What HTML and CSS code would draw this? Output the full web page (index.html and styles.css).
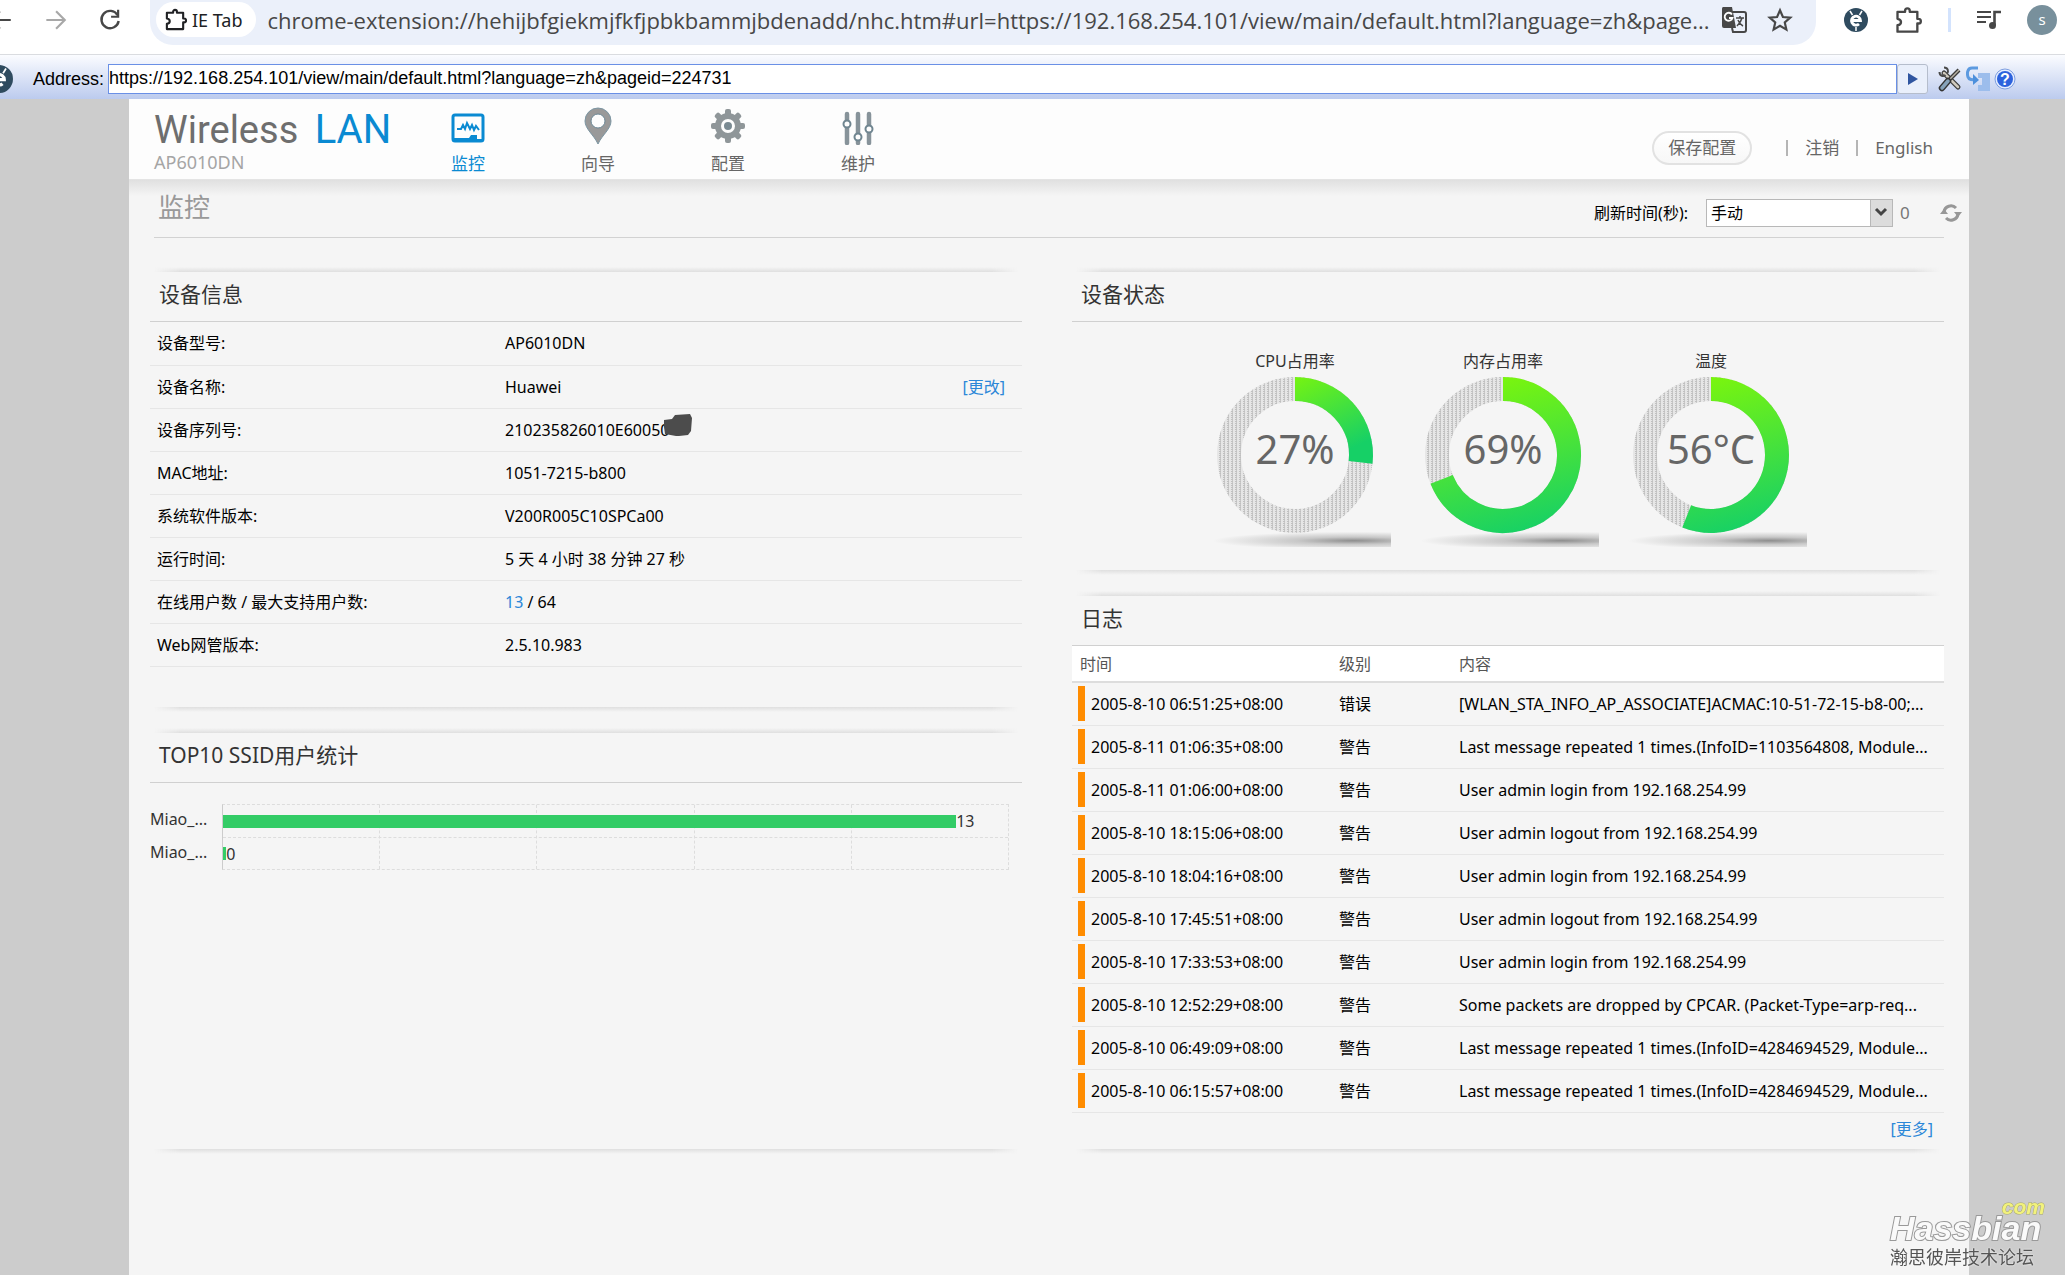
FILE: index.html
```html
<!DOCTYPE html>
<html lang="zh">
<head>
    <meta charset="UTF-8">
    <meta name="viewport" content="width=device-width, initial-scale=1.0">
    <title>Wireless LAN AP6010DN</title>
    <link rel="stylesheet" href="styles.css">
</head>
<body>

    <div class="browser-bar">
        <button class="icon-btn back" aria-label="Back">
            <svg width="26" height="26" viewBox="0 0 24 24"><path d="M21 12H4M11 4l-8 8 8 8" fill="none" stroke="#474747" stroke-width="2"/></svg>
        </button>
        <button class="icon-btn forward" aria-label="Forward">
            <svg width="26" height="26" viewBox="0 0 24 24"><path d="M4 12h17M13 4l8 8-8 8" fill="none" stroke="#a8a8a8" stroke-width="2"/></svg>
        </button>
        <button class="icon-btn reload" aria-label="Reload">
            <svg width="26" height="26" viewBox="0 0 24 24"><path d="M19 7.500A8 8 0 1 0 20 13" fill="none" stroke="#474747" stroke-width="2.200"/><path d="M20.500 2.500v7.500h-7.500v-2h5.500v-5.500z" fill="#474747"/></svg>
        </button>
        <div class="omnibox">
            <span class="chip">
                <svg width="23" height="23" viewBox="0 0 24 24"><path d="M3 5h6.500V4a2 2 0 0 1 4 0v1H20v6h1a2 2 0 0 1 0 4h-1v7H3v-5.500c4-.5 4-5 0-5.500z" fill="none" stroke="#202124" stroke-width="2.200" stroke-linejoin="round"/></svg>
                IE Tab
            </span>
            <span class="url">chrome-extension://hehijbfgiekmjfkfjpbkbammjbdenadd/nhc.htm#url=https://192.168.254.101/view/main/default.html?language=zh&amp;page...</span>
            <button class="icon-btn" aria-label="Translate">
                <svg width="26" height="28" viewBox="0 0 26 28"><path d="M11 6h12a2 2 0 0 1 2 2v16a2 2 0 0 1-2 2H12l-1-4" fill="none" stroke="#474747" stroke-width="2"/><path d="M2 1h9l4 21H3a2 2 0 0 1-2-2V3a2 2 0 0 1 1-2z" fill="#474747"/><path d="M11 8.500A4 4 0 1 0 11.500 12H8" fill="none" stroke="#fff" stroke-width="1.800"/><path d="M15 12h8M19 10v2M21 12c-1 4-3 6-5 8M17 14c1 3 3 5 5 6" fill="none" stroke="#474747" stroke-width="1.500"/></svg>
            </button>
            <button class="icon-btn" aria-label="Bookmark">
                <svg width="26" height="26" viewBox="0 0 24 24"><path d="M12 3l2.700 6.200 6.800.6-5.100 4.500 1.500 6.600-5.900-3.500-5.900 3.500 1.500-6.600-5.100-4.500 6.800-.6z" fill="none" stroke="#474747" stroke-width="2"/></svg>
            </button>
        </div>
        <div class="browser-tools">
            <svg class="e-logo" width="24" height="24" viewBox="0 0 24 24"><circle cx="12" cy="12" r="12" fill="#2f4b5f"/><path d="M7.500 12.500h9a4.500 4.500 0 1 0-1.500 3.500" fill="none" stroke="#fff" stroke-width="2.800"/><path d="M6 3l2.500 4M18 3l-2.500 4M12 19v4" stroke="#fff" stroke-width="1.500"/></svg>
            <svg width="28" height="28" viewBox="0 0 24 24"><path d="M3 5h6.500V4a2 2 0 0 1 4 0v1H20v6h1a2 2 0 0 1 0 4h-1v7H3v-5.500c4-.5 4-5 0-5.500z" fill="none" stroke="#474747" stroke-width="2" stroke-linejoin="round"/></svg>
            <span class="tool-divider"></span>
            <svg width="24" height="20" viewBox="0 0 24 20"><path d="M0 2h14M0 7h14M0 12h9" stroke="#474747" stroke-width="2.200"/><path d="M17.500 15V2H24" fill="none" stroke="#474747" stroke-width="2.600"/><circle cx="15.500" cy="15.500" r="3.500" fill="#474747"/></svg>
            <span class="avatar">s</span>
        </div>
    </div>

    <form class="ietab-bar">
        <svg class="e-logo" width="28" height="28" viewBox="0 0 24 24"><circle cx="12" cy="12" r="12" fill="#2f4b5f"/><path d="M7.500 12.500h9a4.500 4.500 0 1 0-1.500 3.500" fill="none" stroke="#fff" stroke-width="2.800"/><path d="M6 3l2.500 4M18 3l-2.500 4M12 19v4" stroke="#fff" stroke-width="1.500"/></svg>
        <label for="address">Address:</label>
        <input id="address" type="text" value="https://192.168.254.101/view/main/default.html?language=zh&amp;pageid=224731">
        <button type="button" class="go" aria-label="Go">
            <svg width="12" height="14" viewBox="0 0 12 14"><path d="M1 1l10 6-10 6z" fill="#2f55a0"/></svg>
        </button>
        <svg width="24" height="26" viewBox="0 0 24 26"><path d="M6 7l14 14" stroke="#3c3c3c" stroke-width="5" stroke-linecap="round"/><path d="M6 7l14 14" stroke="#cfc9bd" stroke-width="2.500" stroke-linecap="round"/><path d="M6 1.500c4 0 5 4 3 6M1.500 6c0 4 4 5 6 3" fill="none" stroke="#4a4a4a" stroke-width="2"/><path d="M21 4l-9 9" stroke="#3c3c3c" stroke-width="4"/><path d="M21 4l-9 9" stroke="#b8b1a5" stroke-width="1.500"/><path d="M10 15l-6 7" stroke="#333" stroke-width="6.500" stroke-linecap="round"/><path d="M10 15l-6 7" stroke="#86a2ba" stroke-width="3.500" stroke-linecap="round"/></svg>
        <svg width="24" height="26" viewBox="0 0 24 26"><path d="M12 7h12v18H12v-6h4v-7h-4z" fill="#9cbdec"/><path d="M12 2H6C1 2 1 8 2 11c1 3 4 3 8 3" fill="none" stroke="#5c9ae0" stroke-width="3"/><path d="M7 8l6 6-6 5z" fill="#4c8fdc"/></svg>
        <svg width="22" height="24" viewBox="0 0 22 24"><circle cx="11" cy="12" r="10" fill="#e6eeff" stroke="#7d9ee0"/><circle cx="11" cy="12" r="8" fill="#2c62dd"/><text x="11" y="18" class="help-mark">?</text></svg>
    </form>

    <div class="viewport">
        <div class="page">

            <header class="top">
                <div class="brand">
                    <div class="logo">Wireless <b>LAN</b></div>
                    <div class="model">AP6010DN</div>
                </div>
                <nav class="menu">
                    <a href="#" class="active">
                        <svg width="34" height="38" viewBox="0 0 34 38"><rect x="2" y="8" width="30" height="26" rx="2" fill="none" stroke="#0a8ad2" stroke-width="3"/><path d="M6 22h4l2-4 2 4 2-6 3 6 2-4 2 5 2-4 3 4" fill="none" stroke="#0a8ad2" stroke-width="2"/><path d="M3 33v-2h15l2-3h6v4h5v2z" fill="#0a8ad2"/></svg>
                        监控
                    </a>
                    <a href="#">
                        <svg width="34" height="38" viewBox="0 0 34 38"><path d="M17 37C13 28 4 22 4 14a13 13 0 0 1 26 0c0 8-9 14-13 23z" fill="#999" stroke="#7c96a3"/><circle cx="17" cy="14" r="7" fill="#fdfdfd" stroke="#6b8795"/></svg>
                        向导
                    </a>
                    <a href="#">
                        <svg width="36" height="38" viewBox="0 0 36 38"><g fill="#8f9699"><circle cx="18" cy="19" r="13"/><rect x="15" y="2" width="6" height="34" rx="2"/><rect x="15" y="2" width="6" height="34" rx="2" transform="rotate(45 18 19)"/><rect x="15" y="2" width="6" height="34" rx="2" transform="rotate(90 18 19)"/><rect x="15" y="2" width="6" height="34" rx="2" transform="rotate(135 18 19)"/></g><circle cx="18" cy="19" r="5.500" fill="#7a8a92" stroke="#fdfdfd" stroke-width="3"/></svg>
                        配置
                    </a>
                    <a href="#">
                        <svg width="34" height="38" viewBox="0 0 34 38"><path d="M6 7v29M17 7v29M28 7v29" stroke="#87939a" stroke-width="4.500" stroke-linecap="round"/><g fill="#fdfdfd" stroke="#6f8590" stroke-width="2"><circle cx="6" cy="17" r="3.500"/><circle cx="17" cy="30" r="3.500"/><circle cx="28" cy="22" r="3.500"/></g></svg>
                        维护
                    </a>
                </nav>
                <div class="user-links">
                    <button class="save">保存配置</button>
                    <a href="#">注销</a>
                    <a href="#">English</a>
                </div>
            </header>

            <div class="title-row">
                <h1>监控</h1>
                <div class="refresh">
                    <label for="interval">刷新时间(秒):</label>
                    <select id="interval">
                        <option>手动</option>
                    </select>
                    <span class="count">0</span>
                    <button class="icon-btn" aria-label="刷新">
                        <svg width="22" height="20" viewBox="0 0 22 20"><path d="M4 9a7 7 0 0 1 12-4M18 11a7 7 0 0 1-12 4" fill="none" stroke="#979797" stroke-width="3"/><path d="M0 11h8l-4-5zM14 9h8l-4 5z" fill="#979797"/></svg>
                    </button>
                </div>
            </div>

            <main class="columns">
                <div class="column">
                    <section class="panel info">
                        <h2>设备信息</h2>
                        <table>
                            <tr><th>设备型号:</th><td>AP6010DN</td><td></td></tr>
                            <tr><th>设备名称:</th><td>Huawei</td><td class="action"><a href="#">[更改]</a></td></tr>
                            <tr><th>设备序列号:</th><td><span class="serial">210235826010E60050<svg class="scribble" width="29" height="24" viewBox="0 0 29 24"><path d="M1 6l8-1 3-4 15-1 2 4-1 13-3 4-9 1-3 0-11-2-1-7z" fill="#4c4c4c"/></svg></span></td><td></td></tr>
                            <tr><th>MAC地址:</th><td>1051-7215-b800</td><td></td></tr>
                            <tr><th>系统软件版本:</th><td>V200R005C10SPCa00</td><td></td></tr>
                            <tr><th>运行时间:</th><td>5 天 4 小时 38 分钟 27 秒</td><td></td></tr>
                            <tr><th>在线用户数 / 最大支持用户数:</th><td><a href="#">13</a> / 64</td><td></td></tr>
                            <tr><th>Web网管版本:</th><td>2.5.10.983</td><td></td></tr>
                        </table>
                    </section>

                    <section class="panel ssid">
                        <h2>TOP10 SSID用户统计</h2>
                        <div class="chart">
                            <div class="names">
                                <span>Miao_...</span>
                                <span>Miao_...</span>
                            </div>
                            <div class="plot">
                                <div class="grid"><i></i><i></i><i></i><i></i><i></i></div>
                                <div class="bar-row"><span class="bar" style="width: 93.4%"></span>13</div>
                                <div class="bar-row"><span class="bar" style="width: 0.4%"></span>0</div>
                            </div>
                        </div>
                    </section>
                </div>

                <div class="column">
                    <section class="panel status">
                        <h2>设备状态</h2>
                        <div class="gauges" id="gauges"></div>
                    </section>

                    <section class="panel log">
                        <h2>日志</h2>
                        <table>
                            <thead>
                                <tr><th class="time">时间</th><th class="level">级别</th><th>内容</th></tr>
                            </thead>
                            <tbody>
                                <tr><td>2005-8-10 06:51:25+08:00</td><td>错误</td><td>[WLAN_STA_INFO_AP_ASSOCIATE]ACMAC:10-51-72-15-b8-00;...</td></tr>
                                <tr><td>2005-8-11 01:06:35+08:00</td><td>警告</td><td>Last message repeated 1 times.(InfoID=1103564808, Module...</td></tr>
                                <tr><td>2005-8-11 01:06:00+08:00</td><td>警告</td><td>User admin login from 192.168.254.99</td></tr>
                                <tr><td>2005-8-10 18:15:06+08:00</td><td>警告</td><td>User admin logout from 192.168.254.99</td></tr>
                                <tr><td>2005-8-10 18:04:16+08:00</td><td>警告</td><td>User admin login from 192.168.254.99</td></tr>
                                <tr><td>2005-8-10 17:45:51+08:00</td><td>警告</td><td>User admin logout from 192.168.254.99</td></tr>
                                <tr><td>2005-8-10 17:33:53+08:00</td><td>警告</td><td>User admin login from 192.168.254.99</td></tr>
                                <tr><td>2005-8-10 12:52:29+08:00</td><td>警告</td><td>Some packets are dropped by CPCAR. (Packet-Type=arp-req...</td></tr>
                                <tr><td>2005-8-10 06:49:09+08:00</td><td>警告</td><td>Last message repeated 1 times.(InfoID=4284694529, Module...</td></tr>
                                <tr><td>2005-8-10 06:15:57+08:00</td><td>警告</td><td>Last message repeated 1 times.(InfoID=4284694529, Module...</td></tr>
                            </tbody>
                        </table>
                        <a href="#" class="more">[更多]</a>
                    </section>
                </div>
            </main>
        </div>
    </div>

    <div class="watermark">
        <div class="tld">com</div>
        <div class="site">Hassbian</div>
        <div class="forum">瀚思彼岸技术论坛</div>
    </div>

    <script src="gauges.js"></script>
</body>
</html>
```
FILE: styles.css
```css
* { box-sizing: border-box; }
body {
    margin: 0; min-height: 100vh; display: flex; flex-direction: column;
    background: #ccc; color: #000; overflow: hidden;
    font: 16px/24px "Noto Sans", "Noto Sans CJK SC", sans-serif;
}
h1, h2 { margin: 0; font-weight: normal; }
a { color: #2b87d8; text-decoration: none; }
button { font: inherit; cursor: pointer; }
svg { display: block; flex: none; }
table { width: 100%; border-collapse: collapse; table-layout: fixed; }
th { font-weight: normal; text-align: left; }
td, th { padding: 0; }
.icon-btn { padding: 0; border: none; background: none; }

/* browser toolbar */
.browser-bar { display: flex; height: 55px; background: #fff; border-bottom: 1px solid #dadce0; }
.browser-bar > .icon-btn { height: 40px; }
.back { margin-left: -12px; }
.forward { margin-left: 28px; }
.reload { margin-left: 29px; }
.omnibox {
    flex: 1; min-width: 0; display: flex; align-items: center; gap: 20px; height: 45px; margin-left: 27px;
    padding: 0 23px 6px 6px; background: #ebf0fa; border-radius: 0 0 23px 23px;
}
.chip {
    display: flex; align-items: center; gap: 5px; height: 35px; padding: 0 13px 0 8px;
    background: #fff; border-radius: 18px; font-size: 18px; color: #202124; white-space: nowrap;
}
.url { flex: 1; min-width: 0; margin-left: -8px; font-family: "Open Sans", sans-serif; font-size: 22px; line-height: 30px; color: #474747; white-space: nowrap; }
.browser-tools { display: flex; align-items: center; gap: 26px; height: 40px; padding: 0 8px 0 28px; }
.tool-divider { width: 3px; height: 24px; background: #d3e3fd; }
.avatar { width: 30px; height: 30px; border-radius: 50%; background: #78909c; color: #fff; font-size: 15px; line-height: 28px; text-align: center; }

/* IE Tab address bar */
.ietab-bar {
    display: flex; align-items: center; gap: 4px; height: 44px; padding: 3px 49px 0 0;
    background: linear-gradient(#fbfcff, #bccbee); font: 18px/28px "Liberation Sans", sans-serif;
}
.ietab-bar .e-logo { margin: 0 16px 0 -15px; }
.ietab-bar input { flex: 1; height: 30px; margin-right: -4px; padding: 0; border: 1px solid #6a90e6; background: #fff; font: inherit; }
.go { display: flex; align-items: center; justify-content: center; width: 31px; height: 30px; margin-right: 6px; padding: 0; border: 1px solid #b5bdcc; border-radius: 3px; background: #e9effb; }
.help-mark { font: bold 16px "Liberation Sans", sans-serif; fill: #fff; text-anchor: middle; }

.viewport { flex: 1; display: flex; padding: 0 96px 0 129px; }
.page { flex: 1; background: #f5f5f5; }

/* page header */
.top { display: flex; height: 81px; padding: 0 36px 0 25px; background: #fdfdfd; border-bottom: 1px solid #e4e4e4; color: #666; }
.brand { width: 249px; padding-top: 11px; }
.logo { font: 38px/40px Roboto, sans-serif; color: #6e6e6e; white-space: nowrap; }
.logo b { margin-left: 7px; font-weight: normal; font-size: 40px; color: #0a8ad2; }
.model { font-size: 18px; line-height: 24px; color: #a5a5a5; }
.menu { display: flex; }
.menu a { display: flex; flex-direction: column; align-items: center; gap: 8px; width: 130px; padding-top: 8px; color: #666; font-size: 17px; line-height: 22px; }
.menu .active { color: #0a8ad2; }
.user-links { display: flex; align-items: center; margin: 18px 0 0 auto; font-size: 17px; }
.save { height: 34px; margin-right: 34px; padding: 0 14px; border: 2px solid #e2e2e2; border-radius: 17px; background: linear-gradient(#fff, #f7f7f7); color: #666; line-height: 26px; }
.user-links a { display: flex; align-items: center; color: #666; }
.user-links a::before { content: ""; width: 2px; height: 16px; margin-right: 17px; background: #b5b5b5; }
.user-links a + a { margin-left: 17px; }

.title-row { display: flex; justify-content: space-between; height: 57px; padding: 0 7px 0 25px; background: linear-gradient(#e0e0e0, #f5f5f5 16px); }
.title-row h1 { padding: 8px 0 0 4px; font-size: 26px; line-height: 38px; color: #999; }
.refresh { display: flex; align-items: center; padding-top: 9px; }
.refresh select {
    width: 187px; height: 28px; margin: 0 7px 0 18px; padding: 0 4px; border: 1px solid #b8b8b8; border-radius: 0;
    appearance: none; font: inherit; color: #000;
    background: url("data:image/svg+xml,%3Csvg xmlns='http://www.w3.org/2000/svg' width='22' height='26'%3E%3Cpath d='M0 0h22v26H0z' fill='%23dcdcdc'/%3E%3Cpath d='M0 0v26' stroke='%23b8b8b8' stroke-width='2'/%3E%3Cpath d='M6 9l5 5 5-5' fill='none' stroke='%23444' stroke-width='3'/%3E%3C/svg%3E") right center no-repeat #fff;
}
.count { width: 40px; font-size: 17px; color: #777; }

/* panels */
.columns { display: grid; grid-template-columns: 1fr 1fr; gap: 50px; margin: 0 25px 0 21px; padding-top: 30px; position: relative; }
.columns::before { content: ""; position: absolute; top: 0; left: 4px; right: 0; height: 1px; background: #d2d2d2; }
.column { display: flex; flex-direction: column; gap: 16px; }
.panel { display: flex; flex-direction: column; }
.panel::before, .panel::after {
    content: ""; height: 5px; margin: 0 4px;
    background: linear-gradient(#f5f5f5, #dfdfdf);
    mask-image: linear-gradient(90deg, transparent, #000 3%, #000 97%, transparent);
}
.panel::after { margin-top: auto; background: linear-gradient(#dfdfdf, #f5f5f5); }
.panel h2 { height: 50px; padding-left: 9px; border-bottom: 1px solid #d0d0d0; font-size: 21px; line-height: 45px; color: #333; }

.info { height: 445px; }
.info th { width: 355px; padding-left: 7px; }
.info tr { height: 43px; border-bottom: 1px solid #e6e6e6; }
.info td:last-child { width: 80px; }
.info .action { padding-right: 17px; text-align: right; }
.serial { position: relative; }
.scribble { position: absolute; right: -23px; top: -5px; }

/* SSID chart */
.ssid { flex: 1; }
.chart { display: flex; padding: 21px 13px 0 0; color: #333; }
.names { width: 72px; }
.names span { display: block; height: 33px; line-height: 30px; }
.plot { flex: 1; position: relative; border: 1px dashed #ddd; border-left: 1px solid #ccc; }
.bar-row { display: flex; align-items: center; height: 32px; position: relative; }
.bar-row + .bar-row { border-top: 1px dashed #ddd; }
.bar { height: 13px; background: #33cc66; }
.grid { position: absolute; inset: 0; display: flex; }
.grid i { flex: 1; border-right: 1px dashed #ddd; }
.grid i:last-child { border: none; }

/* gauges */
.status { height: 308px; }
.gauges { display: flex; padding: 27px 0 0 119px; }
.gauge { width: 208px; text-align: center; color: #333; }
.gauge svg { width: 208px; height: 190px; }
.gauge-value { font-size: 40px; fill: #666; text-anchor: middle; }

/* log */
.log { flex: 1; }
.log .time { width: 267px; }
.log .level { width: 120px; }
.log thead tr { height: 36px; background: #fff; border-bottom: 2px solid #ddd; color: #555; }
.log thead .time { padding-left: 8px; }
.log tbody tr { height: 43px; border-bottom: 1px solid #e6e6e6; }
.log td { white-space: nowrap; }
.log td:first-child { padding-left: 19px; background: linear-gradient(#ff8c00, #ff8c00) 6px 3px / 7px 35px no-repeat; }
.more { margin: 4px 11px 8px auto; }

.watermark { position: fixed; right: 20px; bottom: 7px; width: 155px; }
.tld { font: italic bold 21px/12px "Liberation Sans", sans-serif; color: #f2f27c; -webkit-text-stroke: 1px #a8a86a; paint-order: stroke; text-align: right; }
.site { font: italic bold 34px/30px "Liberation Sans", sans-serif; color: #fafafa; -webkit-text-stroke: 2px #999; paint-order: stroke; }
.forum { padding-top: 3px; font-size: 18px; line-height: 22px; color: #555; text-shadow: 0 0 2px #fff; white-space: nowrap; }
```
FILE: gauges.js
```js
const gauges = [
    { label: "CPU占用率", text: "27%", value: 26.8, end: 0.55 },
    { label: "内存占用率", text: "69%", value: 69, end: 1 },
    { label: "温度", text: "56°C", value: 56, end: 1 }
];

const cx = 104, cy = 82, r = 66;

function arc(value) {
    const a = value / 100 * 2 * Math.PI;
    const x = cx + r * Math.sin(a);
    const y = cy - r * Math.cos(a);
    return `M${cx} ${cy - r}A${r} ${r} 0 ${value > 50 ? 1 : 0} 1 ${x} ${y}`;
}

document.getElementById("gauges").innerHTML = gauges.map((g, i) => `
    <div class="gauge">
        <div>${g.label}</div>
        <svg viewBox="0 0 208 190">
            <defs>
                <pattern id="hatch${i}" width="4" height="2" patternUnits="userSpaceOnUse">
                    <rect width="4" height="2" fill="#e6e6e6"/><rect width="2" height="1" fill="#c0c0c0"/><rect x="1" y="1" width="1" height="1" fill="#c8c8c8"/>
                </pattern>
                <linearGradient id="green${i}" gradientUnits="userSpaceOnUse" x1="90" y1="4" x2="130" y2="${4 + 156 * g.end}">
                    <stop offset="0" stop-color="#7cf60c"/><stop offset="1" stop-color="#16d066"/>
                </linearGradient>
                <radialGradient id="shade${i}" cx="0.8" cy="0.65" r="0.5" gradientTransform="translate(-0.4 0) scale(1.5 1)">
                    <stop offset="0" stop-color="#8e8e8e"/><stop offset="0.4" stop-color="#c8c8c8"/><stop offset="1" stop-color="#f5f5f5"/>
                </radialGradient>
            </defs>
            <rect x="12" y="156" width="188" height="18" fill="url(#shade${i})"/>
            <circle cx="${cx}" cy="${cy}" r="${r}" fill="none" stroke="url(#hatch${i})" stroke-width="24"/>
            <path d="${arc(g.value)}" fill="none" stroke="url(#green${i})" stroke-width="24"/>
            <text class="gauge-value" x="${cx}" y="91">${g.text}</text>
        </svg>
    </div>`).join("");
```
